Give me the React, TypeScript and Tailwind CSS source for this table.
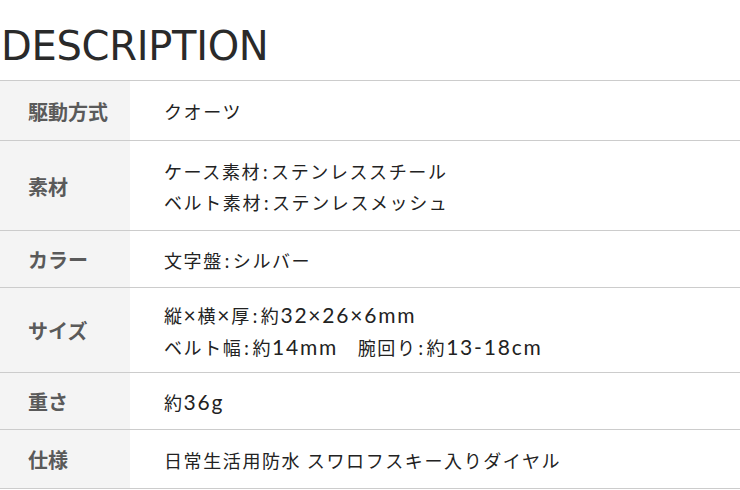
import React from "react";

const rows: { label: string; lines: string[]; h: string }[] = [
  { label: "駆動方式", lines: ["クオーツ"], h: "h-[60px]" },
  { label: "素材", lines: ["ケース素材：ステンレススチール", "ベルト素材：ステンレスメッシュ"], h: "h-[90px]" },
  { label: "カラー", lines: ["文字盤：シルバー"], h: "h-[57px]" },
  { label: "サイズ", lines: ["縦×横×厚：約32×26×6mm", "ベルト幅：約14mm　腕回り：約13-18cm"], h: "h-[85px]" },
  { label: "重さ", lines: ["約36g"], h: "h-[57px]" },
  { label: "仕様", lines: ["日常生活用防水 スワロフスキー入りダイヤル"], h: "h-[59px]" },
];

function Val({ text }: { text: string }) {
  const tokens = text.split(/(：|[0-9A-Za-z×\-]+)/).filter((t) => t !== "");
  return (
    <>
      {tokens.map((t, i) => {
        if (t === "：") {
          return (
            <span key={i} className="inline-block w-[10px] text-center">
              :
            </span>
          );
        }
        if (/^[0-9A-Za-z×\-]+$/.test(t)) {
          return (
            <span key={i} className="text-[21px] tracking-[1.8px]" style={{ fontFamily: '"Lato", sans-serif' }}>
              {t}
            </span>
          );
        }
        return <span key={i}>{t}</span>;
      })}
    </>
  );
}

export default function App() {
  return (
    <div className="w-[740px] h-[490px] bg-white overflow-hidden">
      <div
        className="h-[80px] pt-[26px] pl-[1px] text-[40px] leading-[40px] text-[#2a2a2a] tracking-[-0.3px]"
        style={{ fontFamily: '"DejaVu Sans", sans-serif' }}
      >
        DESCRIPTION
      </div>
      <div className="border-t border-[#cccccc]">
        {rows.map((r) => (
          <div key={r.label} className={`flex border-b border-[#cccccc] ${r.h}`}>
            <div
              className="w-[130px] shrink-0 bg-[#f4f4f4] flex items-center pl-[28px] pt-[2px] text-[20px] font-bold text-[#5a5a5a]"
              style={{ fontFamily: '"Noto Sans CJK JP", sans-serif' }}
            >
              {r.label}
            </div>
            <div
              className="flex flex-col justify-center pl-[34px] pt-[2px] text-[18px] leading-[31px] text-[#222222] tracking-[1.6px]"
              style={{ fontFamily: '"Noto Sans CJK JP", sans-serif' }}
            >
              {r.lines.map((l) => (
                <div key={l} className="whitespace-pre">
                  <Val text={l} />
                </div>
              ))}
            </div>
          </div>
        ))}
      </div>
    </div>
  );
}
